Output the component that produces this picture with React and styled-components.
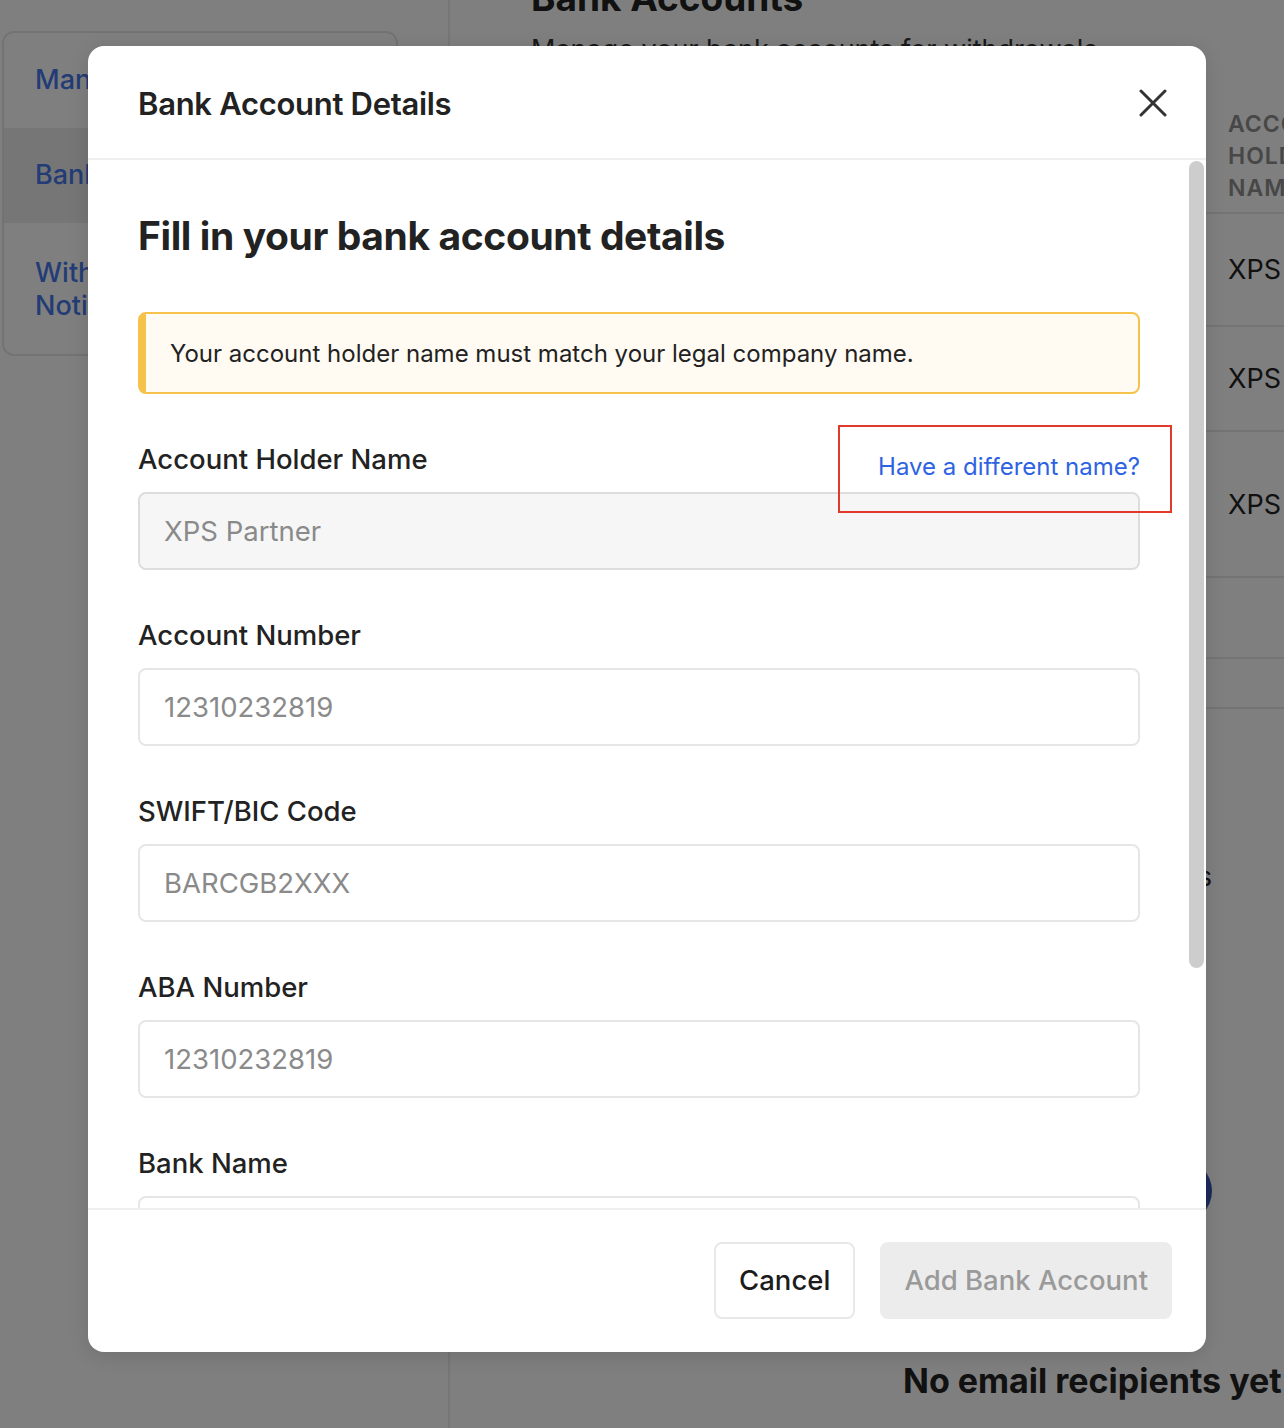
import React from 'react';
import styled, { createGlobalStyle } from 'styled-components';

// Global
const GlobalStyle = createGlobalStyle`
    *{ box-sizing:border-box; }
    html, body{
        margin:0;
        padding:0;
        background:#fff;
        font-family:Inter, "Noto Sans", "Liberation Sans", sans-serif;
        color:#1f1f1f;
    }
`

// Background page
const Page = styled.div`
    position:relative;
    width:1284px;
    height:1428px;
    overflow:hidden;
    display:grid;
    grid-template-columns:450px minmax(0, 1fr);
    background:#fff;
`

const Sidebar = styled.aside`
    border-right:2px solid #ececec;
    padding:31px 50px 0 2px;
`

const SideCard = styled.nav`
    border:2px solid #e6e6e6;
    border-radius:12px;
    overflow:hidden;
    padding-bottom:14px;
`

const SideItem = styled.div`
    padding:${({tall}) => tall ? '33px 31px 18px' : '30px 31px'};
    min-height:95px;
    font-size:27px;
    font-weight:500;
    line-height:33px;
    color:#4679ec;
    background:${({active}) => active ? '#ededed' : 'transparent'};
    max-width:${({tall}) => tall ? '300px' : 'none'};
`

const Main = styled.main`
    padding-left:81px;
    display:flex;
    flex-direction:column;
    overflow:hidden;
`

const PageTitle = styled.h1`
    margin:-24px 0 0;
    font-size:37px;
    font-weight:700;
    line-height:44px;
    color:#222;
`

const PageSub = styled.p`
    margin:14px 0 0;
    font-size:27px;
    line-height:32px;
    color:#333;
`

const Table = styled.div`
    margin-top:36px;
    display:grid;
    grid-template-columns:677px 1fr;
`

const HeadCell = styled.div`
    padding:${({first}) => first ? '0' : '6px 0 10px 20px'};
    font-size:23px;
    font-weight:600;
    line-height:32px;
    letter-spacing:1px;
    color:#8e8e8e;
    border-bottom:2px solid #e8e8e8;
    height:112px;
    overflow:hidden;
    white-space:nowrap;
`

const Cell = styled.div`
    height:${({h}) => h}px;
    display:flex;
    align-items:center;
    padding-left:20px;
    font-size:27px;
    color:#222;
    border-bottom:2px solid #e8e8e8;
    white-space:nowrap;
    overflow:hidden;
`

const NoteRow = styled.div`
    margin-top:152px;
    padding-right:72px;
    display:flex;
    justify-content:flex-end;
    font-size:26px;
    color:#222;
    white-space:nowrap;
`

const EmptyTitle = styled.div`
    margin-top:468px;
    padding-left:372px;
    font-size:34px;
    font-weight:700;
    color:#222;
    white-space:nowrap;
`

const Fab = styled.div`
    position:absolute;
    left:1148px;
    top:1159px;
    width:64px;
    height:64px;
    border-radius:50%;
    background:#3a55b4;
`

// Modal
const Overlay = styled.div`
    position:absolute;
    inset:0;
    background:rgba(0,0,0,0.5);
    display:flex;
    justify-content:center;
    align-items:flex-start;
    padding:46px 0 0 10px;
`

const Modal = styled.div`
    width:1118px;
    height:1306px;
    background:#fff;
    border-radius:16px;
    display:flex;
    flex-direction:column;
    overflow:hidden;
    box-shadow:0 4px 20px rgba(0,0,0,0.12);
`

const ModalHeader = styled.div`
    height:114px;
    flex-shrink:0;
    display:flex;
    align-items:center;
    justify-content:space-between;
    padding:2px 38px 0 50px;
    border-bottom:2px solid #efefef;
`

const ModalTitle = styled.h2`
    margin:0;
    font-size:31px;
    font-weight:600;
    color:#222;
    letter-spacing:-0.3px;
`

const CloseButton = styled.button`
    border:none;
    background:none;
    padding:0;
    width:30px;
    height:30px;
    display:flex;
    align-items:center;
    justify-content:center;
    cursor:pointer;
`

const BodyWrap = styled.div`
    position:relative;
    flex:1;
    min-height:0;
    display:flex;
`

const ModalBody = styled.div`
    flex:1;
    overflow:hidden;
    padding:52px 66px 240px 50px;
`

const ScrollThumb = styled.div`
    position:absolute;
    top:1px;
    right:2px;
    width:15px;
    height:807px;
    border-radius:8px;
    background:#cdcdcd;
`

const Heading = styled.h3`
    margin:0;
    font-size:39px;
    font-weight:700;
    line-height:48px;
    color:#222;
    letter-spacing:-0.4px;
`

const Alert = styled.div`
    margin-top:52px;
    height:82px;
    display:flex;
    align-items:center;
    padding-left:24px;
    background:#fffbf3;
    border:2px solid #f5c34c;
    border-left-width:8px;
    border-radius:8px;
    font-size:24px;
    color:#222;
`

const Field = styled.div`
    margin-top:49px;
    display:flex;
    flex-direction:column;
    gap:17px;
`

const LabelRow = styled.div`
    position:relative;
    display:flex;
    align-items:flex-end;
    justify-content:space-between;
`

const Label = styled.label`
    font-size:27.5px;
    font-weight:500;
    line-height:32px;
    color:#222;
`

const TextLink = styled.a`
    font-size:24px;
    line-height:28px;
    margin-bottom:-6px;
    color:#2d63e3;
    text-decoration:none;
    cursor:pointer;
`

const Marker = styled.div`
    position:absolute;
    top:-18px;
    right:-32px;
    width:334px;
    height:88px;
    border:2px solid #e23a2a;
    pointer-events:none;
`

const Input = styled.input`
    height:78px;
    width:100%;
    padding:0 24px;
    font-family:inherit;
    font-size:27.5px;
    color:#888;
    border:2px solid ${({disabled}) => disabled ? '#dddddd' : '#e6e6e6'};
    border-radius:8px;
    background:${({disabled}) => disabled ? '#f6f6f6' : '#fff'};
    outline:none;

    &::placeholder{
        color:#8a8a8a;
    }
`

const ModalFooter = styled.div`
    height:144px;
    flex-shrink:0;
    border-top:2px solid #efefef;
    display:flex;
    align-items:center;
    justify-content:flex-end;
    gap:25px;
    padding:0 34px 2px 0;
`

const Button = styled.button`
    height:77px;
    padding:0 ${({primary}) => primary ? '22px' : '23px'};
    font-family:inherit;
    font-size:27.5px;
    font-weight:500;
    border-radius:8px;
    border:2px solid ${({primary}) => primary ? '#ececec' : '#e8e8e8'};
    background:${({primary}) => primary ? '#ececec' : '#fff'};
    color:${({primary}) => primary ? '#9a9a9a' : '#1c1c1c'};
    cursor:pointer;
`

const fields = [
    { label: 'Account Number', value: '12310232819' },
    { label: 'SWIFT/BIC Code', value: 'BARCGB2XXX' },
    { label: 'ABA Number', value: '12310232819' },
    { label: 'Bank Name', value: '' },
];

const rows = [113, 105, 146, 81, 50];

export default function App() {
    return (
        <>
            <GlobalStyle />
            <Page>
                <Sidebar>
                    <SideCard>
                        <SideItem>Manage Users</SideItem>
                        <SideItem active>Bank Accounts</SideItem>
                        <SideItem tall>Withdrawal Notifications</SideItem>
                    </SideCard>
                </Sidebar>
                <Main>
                    <PageTitle>Bank Accounts</PageTitle>
                    <PageSub>Manage your bank accounts for withdrawals</PageSub>
                    <Table>
                        <HeadCell first>BANK</HeadCell>
                        <HeadCell>ACCOUNT<br />HOLDER<br />NAME</HeadCell>
                        {rows.map((h, i) => (
                            <React.Fragment key={i}>
                                <Cell h={h} />
                                <Cell h={h}>{i < 3 ? 'XPS Partner' : ''}</Cell>
                            </React.Fragment>
                        ))}
                    </Table>
                    <NoteRow>Email recipients for withdrawals</NoteRow>
                    <EmptyTitle>No email recipients yet</EmptyTitle>
                </Main>
                <Fab />

                <Overlay>
                    <Modal>
                        <ModalHeader>
                            <ModalTitle>Bank Account Details</ModalTitle>
                            <CloseButton aria-label="Close">
                                <svg width="28" height="28" viewBox="0 0 28 28">
                                    <path d="M2 2 L26 26 M26 2 L2 26" stroke="#333" strokeWidth="3" strokeLinecap="round" />
                                </svg>
                            </CloseButton>
                        </ModalHeader>
                        <BodyWrap>
                            <ModalBody>
                                <Heading>Fill in your bank account details</Heading>
                                <Alert>Your account holder name must match your legal company name.</Alert>
                                <Field>
                                    <LabelRow>
                                        <Label>Account Holder Name</Label>
                                        <TextLink>Have a different name?</TextLink>
                                        <Marker />
                                    </LabelRow>
                                    <Input disabled placeholder="XPS Partner" />
                                </Field>
                                {fields.map(f => (
                                    <Field key={f.label}>
                                        <LabelRow>
                                            <Label>{f.label}</Label>
                                        </LabelRow>
                                        <Input placeholder={f.value} />
                                    </Field>
                                ))}
                            </ModalBody>
                            <ScrollThumb />
                        </BodyWrap>
                        <ModalFooter>
                            <Button>Cancel</Button>
                            <Button primary>Add Bank Account</Button>
                        </ModalFooter>
                    </Modal>
                </Overlay>
            </Page>
        </>
    )
}
